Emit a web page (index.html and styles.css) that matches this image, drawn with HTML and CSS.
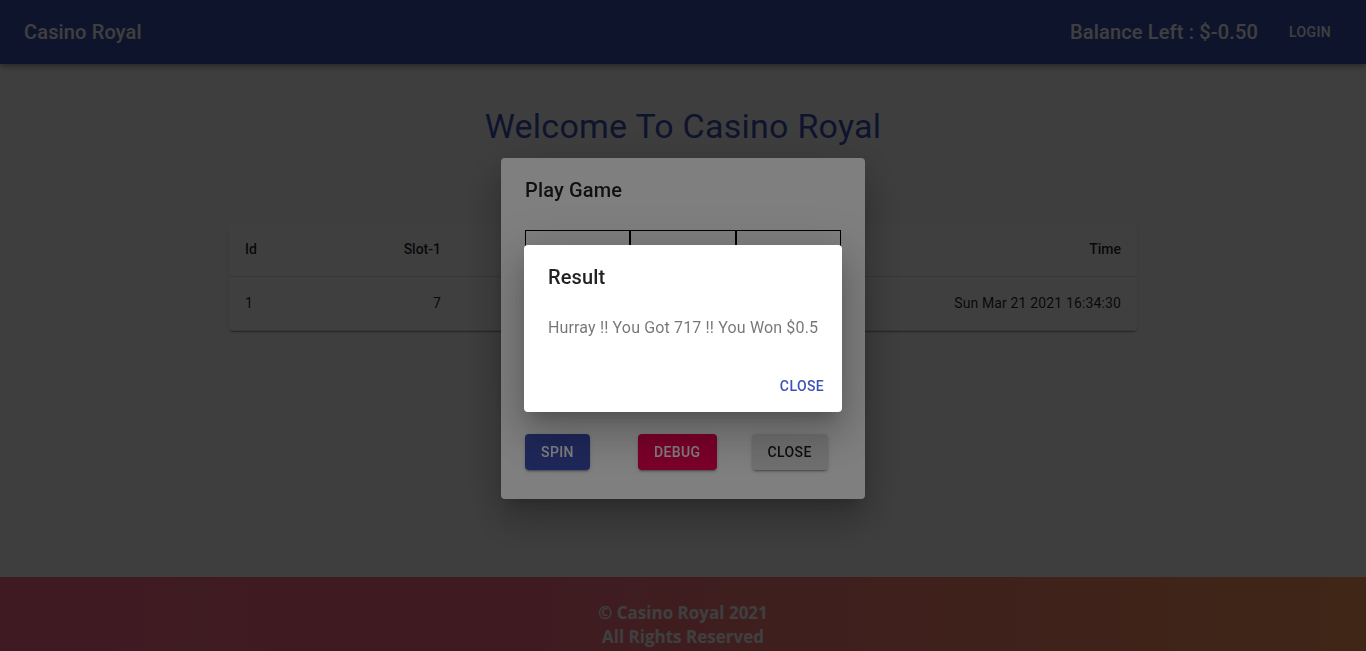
FILE: index.html
```html
<!DOCTYPE html>
<html lang="en">
<head>
<meta charset="utf-8">
<title>Casino Royal</title>
<link rel="stylesheet" href="styles.css">
</head>
<body>
<div class="page">
  <header class="appbar">
    <div class="brand">Casino Royal</div>
    <div class="appbar-right">
      <div class="balance">Balance Left : $-0.50</div>
      <button class="btn-text btn-login">Login</button>
    </div>
  </header>

  <main class="main">
    <h1 class="welcome">Welcome To Casino Royal</h1>
    <div class="paper table-wrap">
      <table class="table">
        <colgroup>
          <col class="c1"><col class="c2"><col class="c3"><col class="c4"><col class="c5">
        </colgroup>
        <thead>
          <tr>
            <th class="left">Id</th>
            <th>Slot-1</th>
            <th>Slot-2</th>
            <th>Slot-3</th>
            <th>Time</th>
          </tr>
        </thead>
        <tbody>
          <tr>
            <td class="left">1</td>
            <td>7</td>
            <td>1</td>
            <td>7</td>
            <td>Sun Mar 21 2021 16:34:30</td>
          </tr>
        </tbody>
      </table>
    </div>
  </main>

  <footer class="footer">
    <div>© Casino Royal 2021</div>
    <div>All Rights Reserved</div>
  </footer>
</div>

<div class="backdrop layer-1">
  <div class="dialog dialog-game">
    <h2 class="dialog-title">Play Game</h2>
    <div class="dialog-content">
      <div class="slots">
        <div class="slot"></div>
        <div class="slot"></div>
        <div class="slot"></div>
      </div>
      <div class="game-actions">
        <button class="btn-contained btn-primary">Spin</button>
        <button class="btn-contained btn-secondary btn-debug">Debug</button>
        <button class="btn-contained btn-default btn-close">Close</button>
      </div>
    </div>
  </div>
</div>

<div class="backdrop layer-2">
  <div class="dialog dialog-result">
    <h2 class="dialog-title">Result</h2>
    <div class="result-content">
      <p class="result-text">Hurray !! You Got 717 !! You Won $0.5</p>
    </div>
    <div class="dialog-actions">
      <button class="btn-text btn-text-primary">Close</button>
    </div>
  </div>
</div>
</body>
</html>
```

FILE: styles.css
```css
* { box-sizing: border-box; }

html, body {
  margin: 0;
  padding: 0;
  height: 100%;
}

body {
  font-family: Roboto, "Liberation Sans", Arial, sans-serif;
  background: #fafafa;
  color: rgba(0, 0, 0, 0.87);
  overflow: hidden;
}

button {
  font-family: Roboto, "Liberation Sans", Arial, sans-serif;
  border: 0;
  cursor: pointer;
}

.page {
  min-height: 100vh;
  display: flex;
  flex-direction: column;
}

/* App bar */
.appbar {
  height: 64px;
  background: #3f51b5;
  color: #fff;
  display: flex;
  align-items: center;
  justify-content: space-between;
  padding: 0 24px;
  box-shadow: 0 2px 4px -1px rgba(0,0,0,0.2), 0 4px 5px 0 rgba(0,0,0,0.14), 0 1px 10px 0 rgba(0,0,0,0.12);
  position: relative;
  z-index: 2;
  flex: none;
}

.brand {
  font-size: 20px;
  font-weight: 500;
  letter-spacing: 0.0075em;
  line-height: 32px;
}

.appbar-right {
  display: flex;
  align-items: center;
}

.balance {
  font-size: 20px;
  font-weight: 500;
  letter-spacing: 0.0075em;
  line-height: 32px;
}

.btn-text {
  background: transparent;
  font-size: 14px;
  font-weight: 500;
  letter-spacing: 0.02857em;
  text-transform: uppercase;
  line-height: 24px;
  padding: 6px 8px;
  min-width: 64px;
  border-radius: 4px;
}

.btn-login {
  color: #fff;
  margin-left: 20px;
}

/* Main */
.main {
  flex: 1;
  padding-top: 41px;
}

.welcome {
  margin: 0;
  text-align: center;
  font-size: 34px;
  font-weight: 400;
  line-height: 42px;
  letter-spacing: 0.00735em;
  color: #3f51b5;
}

.paper {
  background: #fff;
  border-radius: 4px;
  box-shadow: 0 2px 1px -1px rgba(0,0,0,0.2), 0 1px 1px 0 rgba(0,0,0,0.14), 0 1px 3px 0 rgba(0,0,0,0.12);
}

.table-wrap {
  width: 908px;
  margin: 76px auto 0;
  overflow: hidden;
}

.table {
  width: 100%;
  border-collapse: collapse;
  table-layout: fixed;
}

.c1 { width: 114px; }
.c2 { width: 114px; }
.c3 { width: 200px; }
.c4 { width: 190px; }
.c5 { width: 290px; }

.table th,
.table td {
  padding: 16px;
  font-size: 14px;
  line-height: 21px;
  text-align: right;
  border-bottom: 1px solid #e0e0e0;
  color: rgba(0, 0, 0, 0.87);
}

.table th {
  font-weight: 500;
}

.table td {
  font-weight: 400;
  letter-spacing: 0.01em;
}

.table .left {
  text-align: left;
}

/* Footer */
.footer {
  flex: none;
  height: 74px;
  padding-top: 24px;
  background: linear-gradient(to right, #ff6a8a 0%, #ff6f84 40%, #ff9a5c 100%);
  color: #fff;
  text-align: center;
  font-family: "Open Sans", "Noto Sans", sans-serif;
  font-weight: 700;
  font-size: 17px;
  line-height: 24px;
}

/* Backdrops & dialogs */
.backdrop {
  position: fixed;
  inset: 0;
  background: rgba(0, 0, 0, 0.5);
  display: flex;
  align-items: center;
  justify-content: center;
  padding-top: 6px;
}

.layer-1 { z-index: 10; }
.layer-2 { z-index: 20; }

.dialog {
  background: #fff;
  border-radius: 4px;
  box-shadow: 0 11px 15px -7px rgba(0,0,0,0.2), 0 24px 38px 3px rgba(0,0,0,0.14), 0 9px 46px 8px rgba(0,0,0,0.12);
}

.dialog-title {
  margin: 0;
  padding: 16px 24px;
  font-size: 20px;
  font-weight: 500;
  line-height: 32px;
  letter-spacing: 0.0075em;
  color: rgba(0, 0, 0, 0.87);
}

.dialog-game {
  width: 364px;
  height: 341px;
}

.dialog-content {
  padding: 8px 24px 29px;
}

.slots {
  display: grid;
  grid-template-columns: 105px 106px 105px;
  height: 176px;
}

.slot {
  border: 1px solid #000;
}

.game-actions {
  display: flex;
  margin-top: 28px;
}

.btn-contained {
  font-size: 14px;
  font-weight: 500;
  letter-spacing: 0.02857em;
  text-transform: uppercase;
  line-height: 24px;
  padding: 6px 16px;
  min-width: 64px;
  border-radius: 4px;
  box-shadow: 0 3px 1px -2px rgba(0,0,0,0.2), 0 2px 2px 0 rgba(0,0,0,0.14), 0 1px 5px 0 rgba(0,0,0,0.12);
}

.btn-primary {
  background: #3f51b5;
  color: #fff;
}

.btn-secondary {
  background: #f50057;
  color: #fff;
}

.btn-default {
  background: #e0e0e0;
  color: rgba(0, 0, 0, 0.87);
}

.btn-debug { margin-left: 48px; }
.btn-close { margin-left: 35px; }

.dialog-result {
  width: 318px;
}

.result-content {
  padding: 7px 24px 8px;
}

.result-text {
  margin: 0 0 12px;
  font-size: 16px;
  line-height: 24px;
  letter-spacing: 0.00938em;
  color: rgba(0, 0, 0, 0.54);
  white-space: nowrap;
}

.dialog-actions {
  display: flex;
  justify-content: flex-end;
  padding: 8px;
}

.btn-text-primary {
  color: #3f51b5;
}
```
